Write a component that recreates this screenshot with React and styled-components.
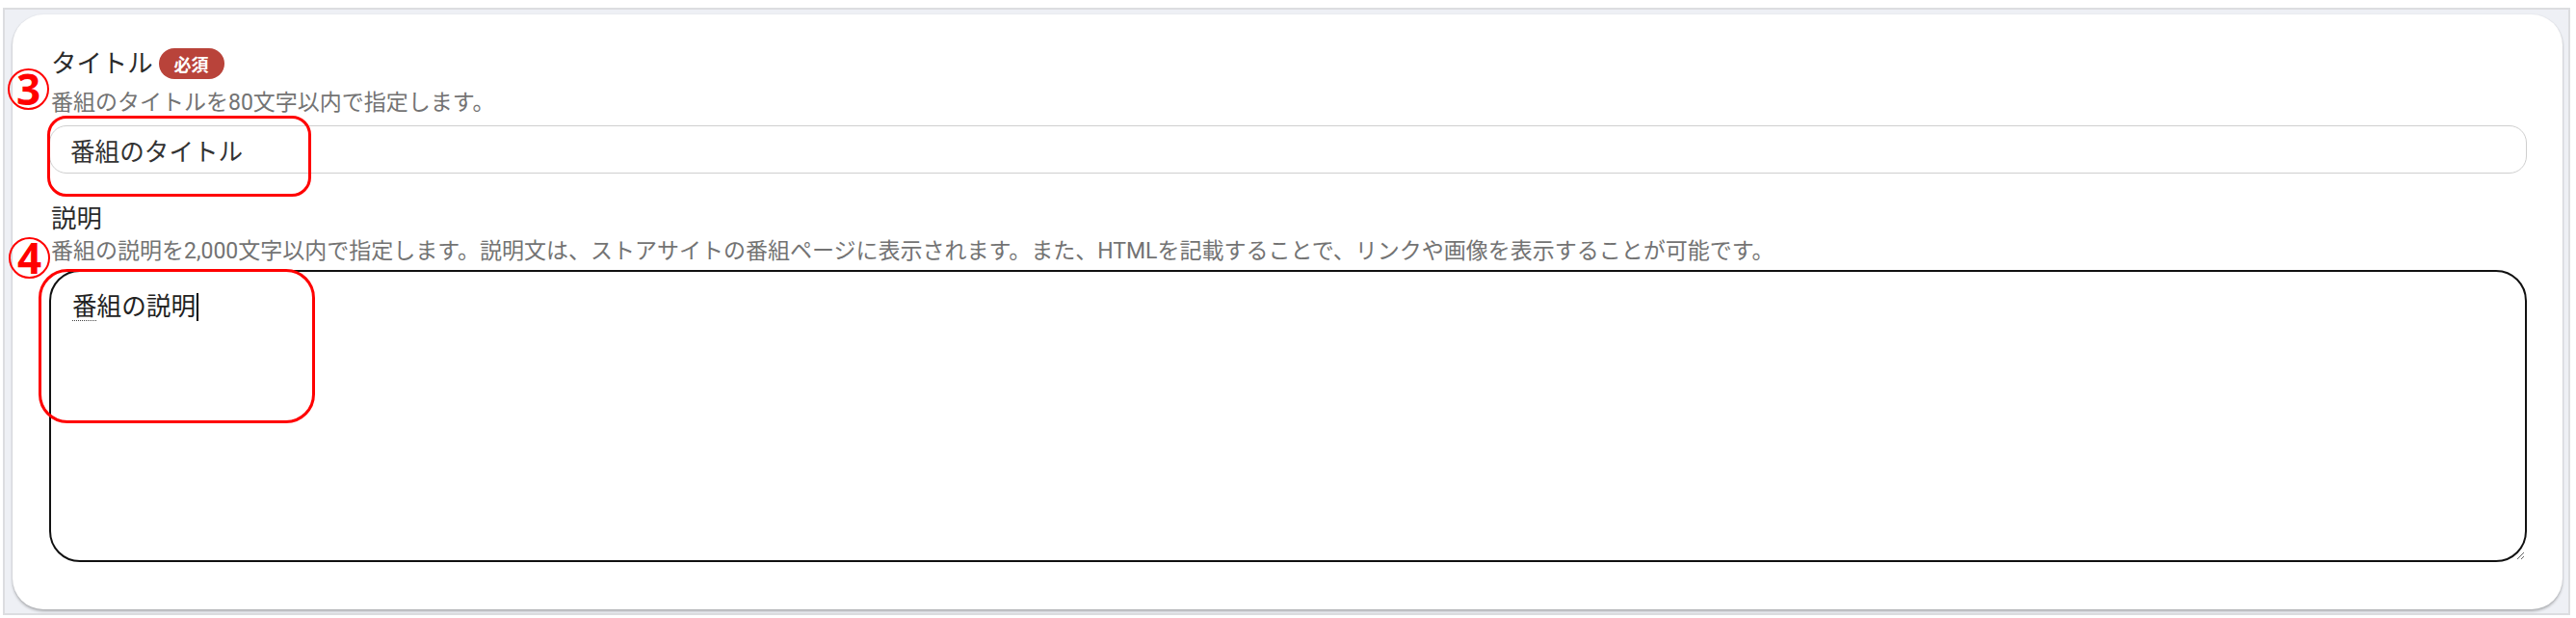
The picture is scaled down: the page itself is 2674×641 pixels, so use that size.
import React from 'react';
import styled, { createGlobalStyle } from 'styled-components';

const GlobalStyle = createGlobalStyle`
  html, body {
    margin: 0;
    padding: 0;
    background: #ffffff;
  }
  body {
    font-family: Roboto, "Noto Sans CJK JP", sans-serif;
  }
`

const Frame = styled.div`
  margin: 8px 6px 3px 3px;
  height: 630px;
  box-sizing: border-box;
  border: 2px solid #dcdde0;
  background: #eef0f5;
  padding: 5px 6px 4px 8px;
  display: flex;
`

const Card = styled.section`
  position: relative;
  flex: 1;
  background: #ffffff;
  border-radius: 32px;
  box-shadow: 0 2px 3px rgba(0, 0, 0, 0.28), 0 0 2px rgba(0, 0, 0, 0.06);
  padding: 34px 37px 49px 38px;
  display: flex;
  flex-direction: column;
`

const Field = styled.div`
  display: flex;
  flex-direction: column;
  margin-top: ${props => props.gap || 0}px;
  flex: ${props => props.grow ? 1 : '0 0 auto'};
`

const LabelRow = styled.div`
  display: flex;
  align-items: center;
  gap: 6px;
  height: 34px;
`

const Label = styled.label`
  font-size: 26.4px;
  line-height: 34px;
  color: #2b2b2b;
  padding-left: 2px;
`

const Required = styled.span`
  display: inline-flex;
  align-items: center;
  justify-content: center;
  width: 68px;
  height: 32px;
  border-radius: 16px;
  background: #b9433a;
  color: #ffffff;
  font-size: 18px;
  font-weight: 700;
`

const Help = styled.p`
  margin: ${props => props.top || 0}px 0 0 2px;
  font-size: 23px;
  line-height: 34px;
  color: #737373;
  white-space: nowrap;
`

const TextInput = styled.input`
  margin-top: 6px;
  height: 50px;
  box-sizing: border-box;
  border: 1px solid #cfcfcf;
  border-radius: 18px;
  padding: 0 20px 0 21px;
  font-family: Roboto, "Noto Sans CJK JP", sans-serif;
  font-size: 25.6px;
  color: #333333;
  outline: none;
  background: #ffffff;
`

const TextArea = styled.div`
  margin-top: 2px;
  flex: 1;
  box-sizing: border-box;
  border: 2.5px solid #111111;
  border-radius: 32px;
  padding: 17px 22px;
  font-size: 25.6px;
  line-height: 38px;
  color: #222222;
  resize: vertical;
  overflow: auto;
`

const Composing = styled.span`
  text-decoration: underline dotted #444444;
  text-underline-offset: 5px;
  text-decoration-thickness: 1px;
`

const Caret = styled.span`
  display: inline-block;
  width: 2px;
  height: 29px;
  background: #000000;
  vertical-align: -6px;
  margin-left: 1px;
`

const Marker = styled.div`
  position: absolute;
  left: ${props => props.x}px;
  top: ${props => props.y}px;
  width: 43px;
  height: 43px;
  box-sizing: border-box;
  border: 2px solid #ff0000;
  border-radius: 50%;
  display: flex;
  align-items: center;
  justify-content: center;
  color: #ff0000;
  font-family: "Noto Sans", "Liberation Sans", sans-serif;
  font-weight: 700;
  font-size: 44px;
  line-height: 1;
  padding-bottom: 2px;
  pointer-events: none;
`

const Highlight = styled.div`
  position: absolute;
  left: ${props => props.x}px;
  top: ${props => props.y}px;
  width: ${props => props.w}px;
  height: ${props => props.h}px;
  box-sizing: border-box;
  border: 3px solid #ff0000;
  border-radius: ${props => props.r}px;
  pointer-events: none;
`

export default function App() {
  return (
    <>
      <GlobalStyle />
      <Frame>
        <Card>
          <Field>
            <LabelRow>
              <Label>タイトル</Label>
              <Required>必須</Required>
            </LabelRow>
            <Help top={7}>番組のタイトルを80文字以内で指定します。</Help>
            <TextInput type="text" defaultValue="番組のタイトル" />
          </Field>

          <Field gap={30} grow>
            <LabelRow>
              <Label>説明</Label>
            </LabelRow>
            <Help>番組の説明を2,000文字以内で指定します。説明文は、ストアサイトの番組ページに表示されます。また、HTMLを記載することで、リンクや画像を表示することが可能です。</Help>
            <TextArea>
              <Composing>番</Composing>組の説明<Caret />
            </TextArea>
          </Field>

          <Marker x={-5} y={56}>3</Marker>
          <Highlight x={36} y={105} w={274} h={84} r={20} />
          <Marker x={-4} y={231}>4</Marker>
          <Highlight x={27} y={264} w={287} h={160} r={30} />
        </Card>
      </Frame>
    </>
  );
}
